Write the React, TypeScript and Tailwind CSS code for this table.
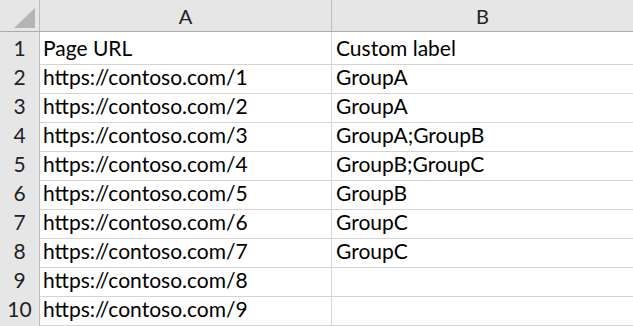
import React from "react";

const rows: [string, string][] = [
  ["Page URL", "Custom label"],
  ["https://contoso.com/1", "GroupA"],
  ["https://contoso.com/2", "GroupA"],
  ["https://contoso.com/3", "GroupA;GroupB"],
  ["https://contoso.com/4", "GroupB;GroupC"],
  ["https://contoso.com/5", "GroupB"],
  ["https://contoso.com/6", "GroupC"],
  ["https://contoso.com/7", "GroupC"],
  ["https://contoso.com/8", ""],
  ["https://contoso.com/9", ""],
];

const App: React.FC = () => {
  return (
    <div
      className="w-[633px] h-[326px] overflow-hidden bg-white text-black"
      style={{ fontFamily: "Lato, 'Liberation Sans', sans-serif" }}
    >
      {/* column headers */}
      <div className="grid grid-cols-[40px_292px_1fr] h-[32px] bg-[#e6e6e6] border-b border-[#ababab] text-[20px] text-[#222]">
        <div className="border-r border-[#bdbdbd] flex items-end justify-end pr-[3px] pb-[3px]">
          <svg width="22" height="20" viewBox="0 0 22 20">
            <polygon points="21,0 21,20 0,20" fill="#b4b4b4" />
          </svg>
        </div>
        <div className="border-r border-[#bdbdbd] flex items-center justify-center">A</div>
        <div className="flex items-center justify-center">B</div>
      </div>

      {/* sheet rows */}
      {rows.map(([url, label], i) => (
        <div key={i} className="grid grid-cols-[40px_292px_1fr] h-[29px] text-[21px]">
          <div className="bg-[#e6e6e6] border-r border-b border-[#bdbdbd] flex items-center justify-center text-[#222]">
            {i + 1}
          </div>
          <div className="border-r border-b border-[#d4d4d4] flex items-center pl-[3px]">{url}</div>
          <div className="border-b border-[#d4d4d4] flex items-center pl-[4px]">{label}</div>
        </div>
      ))}

      {/* next row, cut off by the window */}
      <div className="grid grid-cols-[40px_292px_1fr] h-[29px]">
        <div className="bg-[#e6e6e6] border-r border-[#bdbdbd]" />
        <div className="border-r border-[#d4d4d4]" />
        <div />
      </div>
    </div>
  );
};

export default App;
